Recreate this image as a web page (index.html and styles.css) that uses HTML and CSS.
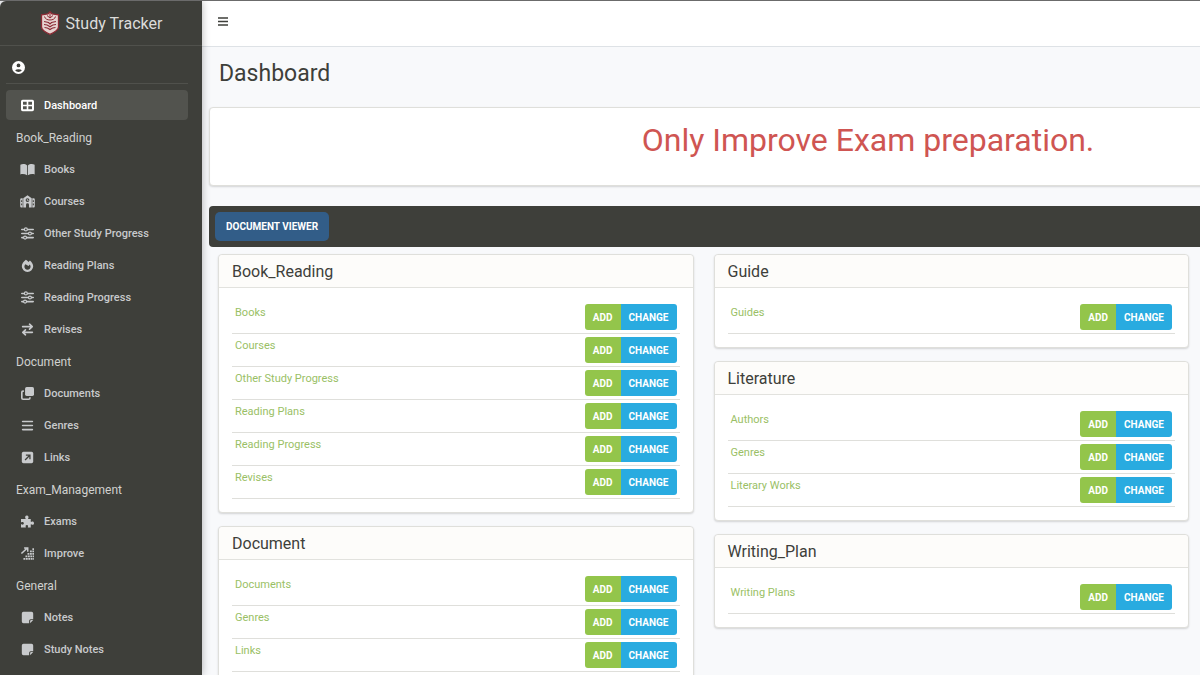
FILE: index.html
```
<!DOCTYPE html>
<html lang="en">

<head>
  <meta charset="UTF-8">
  <meta name="viewport" content="width=device-width, initial-scale=1.0">
  <title>Dashboard | Study Tracker</title>
  <link rel="stylesheet" href="styles.css">
</head>

<body>
  <!-- shared icons -->
  <svg class="icon-defs" aria-hidden="true">
    <symbol id="icon-sliders" viewBox="0 0 16 16">
      <path d="M1 3h14M1 8h14M1 13h14" stroke="currentColor" stroke-width="2" stroke-linecap="round" />
      <circle cx="6" cy="3" r="1.800" fill="#3e3f3a" stroke="currentColor" stroke-width="1.500" />
      <circle cx="11" cy="8" r="1.800" fill="#3e3f3a" stroke="currentColor" stroke-width="1.500" />
      <circle cx="5" cy="13" r="1.800" fill="#3e3f3a" stroke="currentColor" stroke-width="1.500" />
    </symbol>
    <symbol id="icon-note" viewBox="0 0 16 16">
      <path d="M3 1h10a2 2 0 0 1 2 2v7h-3a2 2 0 0 0-2 2v3H3a2 2 0 0 1-2-2V3a2 2 0 0 1 2-2z" fill="currentColor" />
      <path d="M15 11.200l-3.800 3.800v-2.300a1.500 1.500 0 0 1 1.500-1.500z" fill="currentColor" />
    </symbol>
  </svg>

  <aside class="sidebar">
    <a href="#" class="brand">
      <svg class="brand-logo" viewBox="0 0 20 24" aria-hidden="true">
        <path d="M10 .8l2 2 6.500 1v12.200c0 3.200-4.500 5.500-8.500 7.400-4-1.900-8.500-4.200-8.500-7.400V3.800l6.500-1z" fill="#e6d3d0" stroke="#8c2a34" stroke-width="1.300" />
        <path d="M10 1v6M4.500 5.500C5 8 7.500 9 10 9s5-1 5.500-3.500M7 4.500l3 2.500 3-2.500" fill="none" stroke="#8c2a34" stroke-width="1" />
        <path d="M4 10.500l4.500 1L10 13l1.500-1.500 4.500-1M4 13.500c3 0 4.500 1 6 2.200 1.500-1.200 3-2.200 6-2.200M4.500 16.500c2.500 0 4 .8 5.500 2 1.500-1.200 3-2 5.500-2" fill="none" stroke="#8c2a34" stroke-width="1.200" />
      </svg>
      <span>Study Tracker</span>
    </a>

    <div class="user-panel">
      <a href="#" aria-label="Account">
        <svg class="user-icon" viewBox="0 0 16 16" aria-hidden="true">
          <circle cx="8" cy="8" r="8" fill="#fff" />
          <circle cx="8" cy="5.500" r="2.300" fill="#3e3f3a" />
          <path d="M3.800 11.500a4.800 2.600 0 0 1 8.400 0 5.400 5.400 0 0 1-8.400 0z" fill="#3e3f3a" />
        </svg>
      </a>
    </div>

    <nav class="side-nav">
      <ul>
        <li><a href="#" class="active">
            <svg class="icon" viewBox="0 0 16 16" aria-hidden="true">
              <path fill-rule="evenodd" d="M2 1h12a2 2 0 0 1 2 2v10a2 2 0 0 1-2 2H2a2 2 0 0 1-2-2V3a2 2 0 0 1 2-2zM2.500 3.500V7H7V3.500zM9 3.500V7h4.500V3.500zM2.500 9v3.500H7V9zM9 9v3.500h4.500V9z" fill="currentColor" />
            </svg>Dashboard</a></li>

        <li class="nav-header">Book_Reading</li>
        <li><a href="#">
            <svg class="icon" viewBox="0 0 18 16" aria-hidden="true">
              <path d="M8.500 3v12C6 13.600 3 13.300.2 14V2C3.500.8 6.500 1.300 8.500 3zM9.500 3v12c2.500-1.400 5.500-1.700 8.300-1V2c-3.300-1.200-6.300-.7-8.300 1z" fill="currentColor" />
            </svg>Books</a></li>
        <li><a href="#">
            <svg class="icon" viewBox="0 0 18 16" aria-hidden="true">
              <path fill-rule="evenodd" d="M9 .3L14.200 4v11.300h-3.400V12a1.800 1.800 0 0 0-3.600 0v3.300H3.800V4zM9 4a2.300 2.300 0 1 0 0 4.600A2.300 2.300 0 0 0 9 4z" fill="currentColor" />
              <path d="M8.800 5v1.700h1.500" fill="none" stroke="currentColor" />
              <path fill-rule="evenodd" d="M3.100 4v11.300H1.500A1.500 1.500 0 0 1 0 13.800V5.500A1.500 1.500 0 0 1 1.500 4zM1.200 6.500v2h1.200v-2zM1.200 10.500v2h1.200v-2zM14.900 4v11.300h1.600a1.500 1.500 0 0 0 1.500-1.500V5.500A1.500 1.500 0 0 0 16.500 4zM15.600 6.500v2h1.200v-2zM15.600 10.500v2h1.200v-2z" fill="currentColor" />
            </svg>Courses</a></li>
        <li><a href="#"><svg class="icon" aria-hidden="true"><use href="#icon-sliders" /></svg>Other Study Progress</a></li>
        <li><a href="#">
            <svg class="icon" viewBox="0 0 16 16" aria-hidden="true">
              <path fill-rule="evenodd" d="M6 .8c1.300.8 2.400 1.800 3.300 3 .5-.8 1-1.400 1.700-2 2.300 2 4 4.600 4 7.200a7 7 0 0 1-14 0C1 6 3 3 6 .8zM5.500 6.500C4.500 7.500 4.200 8.500 4.200 9.300a3.800 3.800 0 0 0 7.600 0c0-1-.4-1.800-1-2.600L9.300 8.500z" fill="currentColor" />
            </svg>Reading Plans</a></li>
        <li><a href="#"><svg class="icon" aria-hidden="true"><use href="#icon-sliders" /></svg>Reading Progress</a></li>
        <li><a href="#">
            <svg class="icon" viewBox="0 0 16 16" aria-hidden="true">
              <path d="M2 4.500h11M10.500 1.500l3.300 3-3.300 3M14 11.500H3M5.500 8.500l-3.300 3 3.300 3" fill="none" stroke="currentColor" stroke-width="2" stroke-linecap="round" stroke-linejoin="round" />
            </svg>Revises</a></li>

        <li class="nav-header">Document</li>
        <li><a href="#">
            <svg class="icon" viewBox="0 0 16 16" aria-hidden="true">
              <rect x="5" y="0" width="11" height="11" rx="2" fill="currentColor" />
              <path d="M3.500 5H2.500A1.500 1.500 0 0 0 1 6.500v7A1.500 1.500 0 0 0 2.500 15h7a1.500 1.500 0 0 0 1.500-1.500v-1" fill="none" stroke="currentColor" stroke-width="2" />
            </svg>Documents</a></li>
        <li><a href="#">
            <svg class="icon" viewBox="0 0 16 16" aria-hidden="true">
              <path d="M2 3h12M2 8h12M2 13h12" stroke="currentColor" stroke-width="2" stroke-linecap="round" />
            </svg>Genres</a></li>
        <li><a href="#">
            <svg class="icon" viewBox="0 0 16 16" aria-hidden="true">
              <rect x="1" y="1" width="14" height="14" rx="2" fill="currentColor" />
              <path d="M5 11l5.500-5.500M6 5h5v5" fill="none" stroke="#3e3f3a" stroke-width="1.600" />
            </svg>Links</a></li>

        <li class="nav-header">Exam_Management</li>
        <li><a href="#">
            <svg class="icon" viewBox="0 0 16 16" aria-hidden="true">
              <path d="M0 5h5.200c.6 0 .6-.6.300-1C4.500 2.500 5.300.5 7.200.5S9.900 2.500 8.900 4c-.3.500-.3 1 .3 1H12v3c0 .6.500.6 1 .3 1.300-.9 3 0 3 1.700s-1.700 2.600-3 1.700c-.5-.3-1-.3-1 .3v3.500H8.800c-.5 0-.6-.5-.3-.9.700-1.200 0-2.300-1.300-2.300s-2 1.100-1.300 2.300c.3.400.2.900-.3.900H0v-3.700c0-.6.500-.6.900-.3C2.200 12.400 3.500 11.500 3.500 10.200S2.200 8 .9 8.800C.5 9.100 0 9 0 8.500z" fill="currentColor" />
            </svg>Exams</a></li>
        <li><a href="#">
            <svg class="icon" viewBox="0 0 16 16" aria-hidden="true">
              <path d="M.5 8L7 2M3.800 1.200h4.500v4.500" fill="none" stroke="currentColor" stroke-width="1.800" />
              <path d="M3 14.500h13M5.500 11.500H16M8 8.500h8M11 5.500h5M14 2.500h2" fill="none" stroke="currentColor" stroke-width="2.200" stroke-dasharray="2.300 .7" />
            </svg>Improve</a></li>

        <li class="nav-header">General</li>
        <li><a href="#"><svg class="icon" aria-hidden="true"><use href="#icon-note" /></svg>Notes</a></li>
        <li><a href="#"><svg class="icon" aria-hidden="true"><use href="#icon-note" /></svg>Study Notes</a></li>
      </ul>
    </nav>
  </aside>

  <div class="page">
    <header class="topbar">
      <button class="menu-btn" type="button" aria-label="Toggle menu">
        <svg viewBox="0 0 10 9" aria-hidden="true">
          <path d="M0 1h10M0 4.500h10M0 8h10" stroke="#3e3f3a" stroke-width="1.300" />
        </svg>
      </button>
    </header>

    <main class="content">
      <h1>Dashboard</h1>

      <div class="wide banner">Only Improve Exam preparation.</div>

      <div class="wide toolbar">
        <a href="#" class="viewer-btn">Document Viewer</a>
      </div>

      <div class="columns">
        <div class="column">
          <section class="card">
            <h2>Book_Reading</h2>
            <table>
              <tr>
                <td><a href="#">Books</a></td>
                <td class="actions"><div class="btn-group"><a href="#" class="add">Add</a><a href="#" class="change">Change</a></div></td>
              </tr>
              <tr>
                <td><a href="#">Courses</a></td>
                <td class="actions"><div class="btn-group"><a href="#" class="add">Add</a><a href="#" class="change">Change</a></div></td>
              </tr>
              <tr>
                <td><a href="#">Other Study Progress</a></td>
                <td class="actions"><div class="btn-group"><a href="#" class="add">Add</a><a href="#" class="change">Change</a></div></td>
              </tr>
              <tr>
                <td><a href="#">Reading Plans</a></td>
                <td class="actions"><div class="btn-group"><a href="#" class="add">Add</a><a href="#" class="change">Change</a></div></td>
              </tr>
              <tr>
                <td><a href="#">Reading Progress</a></td>
                <td class="actions"><div class="btn-group"><a href="#" class="add">Add</a><a href="#" class="change">Change</a></div></td>
              </tr>
              <tr>
                <td><a href="#">Revises</a></td>
                <td class="actions"><div class="btn-group"><a href="#" class="add">Add</a><a href="#" class="change">Change</a></div></td>
              </tr>
            </table>
          </section>

          <section class="card">
            <h2>Document</h2>
            <table>
              <tr>
                <td><a href="#">Documents</a></td>
                <td class="actions"><div class="btn-group"><a href="#" class="add">Add</a><a href="#" class="change">Change</a></div></td>
              </tr>
              <tr>
                <td><a href="#">Genres</a></td>
                <td class="actions"><div class="btn-group"><a href="#" class="add">Add</a><a href="#" class="change">Change</a></div></td>
              </tr>
              <tr>
                <td><a href="#">Links</a></td>
                <td class="actions"><div class="btn-group"><a href="#" class="add">Add</a><a href="#" class="change">Change</a></div></td>
              </tr>
            </table>
          </section>
        </div>

        <div class="column">
          <section class="card">
            <h2>Guide</h2>
            <table>
              <tr>
                <td><a href="#">Guides</a></td>
                <td class="actions"><div class="btn-group"><a href="#" class="add">Add</a><a href="#" class="change">Change</a></div></td>
              </tr>
            </table>
          </section>

          <section class="card">
            <h2>Literature</h2>
            <table>
              <tr>
                <td><a href="#">Authors</a></td>
                <td class="actions"><div class="btn-group"><a href="#" class="add">Add</a><a href="#" class="change">Change</a></div></td>
              </tr>
              <tr>
                <td><a href="#">Genres</a></td>
                <td class="actions"><div class="btn-group"><a href="#" class="add">Add</a><a href="#" class="change">Change</a></div></td>
              </tr>
              <tr>
                <td><a href="#">Literary Works</a></td>
                <td class="actions"><div class="btn-group"><a href="#" class="add">Add</a><a href="#" class="change">Change</a></div></td>
              </tr>
            </table>
          </section>

          <section class="card">
            <h2>Writing_Plan</h2>
            <table>
              <tr>
                <td><a href="#">Writing Plans</a></td>
                <td class="actions"><div class="btn-group"><a href="#" class="add">Add</a><a href="#" class="change">Change</a></div></td>
              </tr>
            </table>
          </section>
        </div>
      </div>
    </main>
  </div>
</body>

</html>
```
FILE: styles.css
```
* {
  box-sizing: border-box;
}

body {
  margin: 0;
  display: flex;
  height: 100vh;
  overflow: hidden;
  border-top: 1px solid #6b6b6b;
  background-color: #f8f9fb;
  color: #3e3f3a;
  font-family: Roboto, sans-serif;
  font-size: 11px;
}

a {
  text-decoration: none;
}

.icon-defs {
  position: absolute;
  width: 0;
  height: 0;
}

/* sidebar */
.sidebar {
  flex: 0 0 202px;
  background-color: #3e3f3a;
  border-top-left-radius: 6px;
  box-shadow: 0 0 8px rgba(0, 0, 0, 0.3);
  overflow: hidden;
  z-index: 2;
}

.brand {
  display: flex;
  align-items: center;
  justify-content: center;
  gap: 6px;
  height: 45px;
  border-bottom: 1px solid #50514c;
  color: #dcdcda;
  font-size: 16px;
}

.brand-logo {
  width: 20px;
  height: 24px;
}

.user-panel {
  margin: 0 14px 0 6px;
  padding: 15px 6px;
  height: 38px;
  border-bottom: 1px solid #50514c;
}

.user-panel a {
  display: block;
  width: 12px;
}

.user-icon {
  display: block;
  width: 13px;
  height: 13px;
}

.side-nav {
  margin: 6px 14px 0 6px;
}

.side-nav ul {
  margin: 0;
  padding: 0;
  list-style: none;
}

.side-nav a {
  display: flex;
  align-items: center;
  gap: 9px;
  height: 30px;
  margin-bottom: 2px;
  padding: 0 14px;
  border-radius: 4px;
  color: #c8cacc;
  font-weight: 500;
}

.side-nav a:hover,
.side-nav .active {
  background-color: #52534e;
  color: #fff;
}

.icon {
  width: 15px;
  height: 13px;
}

.nav-header {
  height: 32px;
  padding: 0 10px;
  color: #d0d1cf;
  font-size: 12px;
  line-height: 32px;
}

/* right side */
.page {
  flex: 1;
  min-width: 0;
  overflow-x: hidden;
  overflow-y: auto;
  scrollbar-width: none;
}

.topbar {
  display: flex;
  align-items: center;
  height: 46px;
  padding: 0 13px 4px;
  background-color: #fff;
  border-bottom: 1px solid #dee2e6;
}

.menu-btn {
  padding: 3px;
  border: none;
  background: none;
  cursor: pointer;
}

.menu-btn svg {
  display: block;
  width: 10px;
  height: 9px;
}

.content {
  padding: 12px 0 20px 7px;
}

h1 {
  margin: 0 10px 18px;
  font-size: 23px;
  font-weight: 400;
  line-height: 30px;
}

/* these two run past the right edge */
.wide {
  width: 133%;
}

.banner {
  height: 79px;
  margin-bottom: 20px;
  padding-top: 12px;
  background-color: #fff;
  border: 1px solid #dfdfdb;
  border-radius: 4px;
  box-shadow: 0 1px 2px rgba(0, 0, 0, 0.15);
  color: #cf5552;
  font-size: 32px;
  line-height: 40px;
  text-align: center;
}

.toolbar {
  padding: 6px;
  background-color: #3e3f3a;
  border-radius: 4px;
}

.viewer-btn {
  display: block;
  width: max-content;
  padding: 0 11px;
  background-color: #325d88;
  border-radius: 5px;
  color: #fff;
  font-size: 10px;
  font-weight: 700;
  line-height: 29px;
  text-transform: uppercase;
}

.columns {
  display: grid;
  grid-template-columns: 1fr 1fr;
  gap: 20px;
  align-items: start;
  padding: 7px 11px 0 9px;
}

.column {
  display: grid;
  gap: 13px;
}

.card {
  padding-bottom: 13px;
  background-color: #fff;
  border: 1px solid #dfdfdb;
  border-radius: 4px;
  box-shadow: 0 1px 2px rgba(0, 0, 0, 0.15);
}

.card h2 {
  margin: 0 0 13px;
  padding: 2px 13px 0;
  background-color: #fdfcfa;
  border-bottom: 1px solid #e2e2de;
  border-radius: 4px 4px 0 0;
  font-size: 16px;
  font-weight: 400;
  line-height: 30px;
}

.card table {
  width: calc(100% - 26px);
  margin: 0 13px;
  border-collapse: separate;
  border-spacing: 0;
}

.card td {
  padding: 3px;
  border-bottom: 1px solid #dfdfdb;
  line-height: 18px;
  vertical-align: top;
}

.card td a {
  color: #9abf66;
}

.actions {
  width: 1px;
}

.btn-group {
  display: flex;
}

.card .btn-group a {
  padding: 1px 8px 0;
  color: #fff;
  font-size: 10px;
  font-weight: 700;
  line-height: 25px;
  text-transform: uppercase;
}

.add {
  background-color: #93c54b;
  border-radius: 3px 0 0 3px;
}

.change {
  background-color: #29abe0;
  border-radius: 0 3px 3px 0;
}
```
